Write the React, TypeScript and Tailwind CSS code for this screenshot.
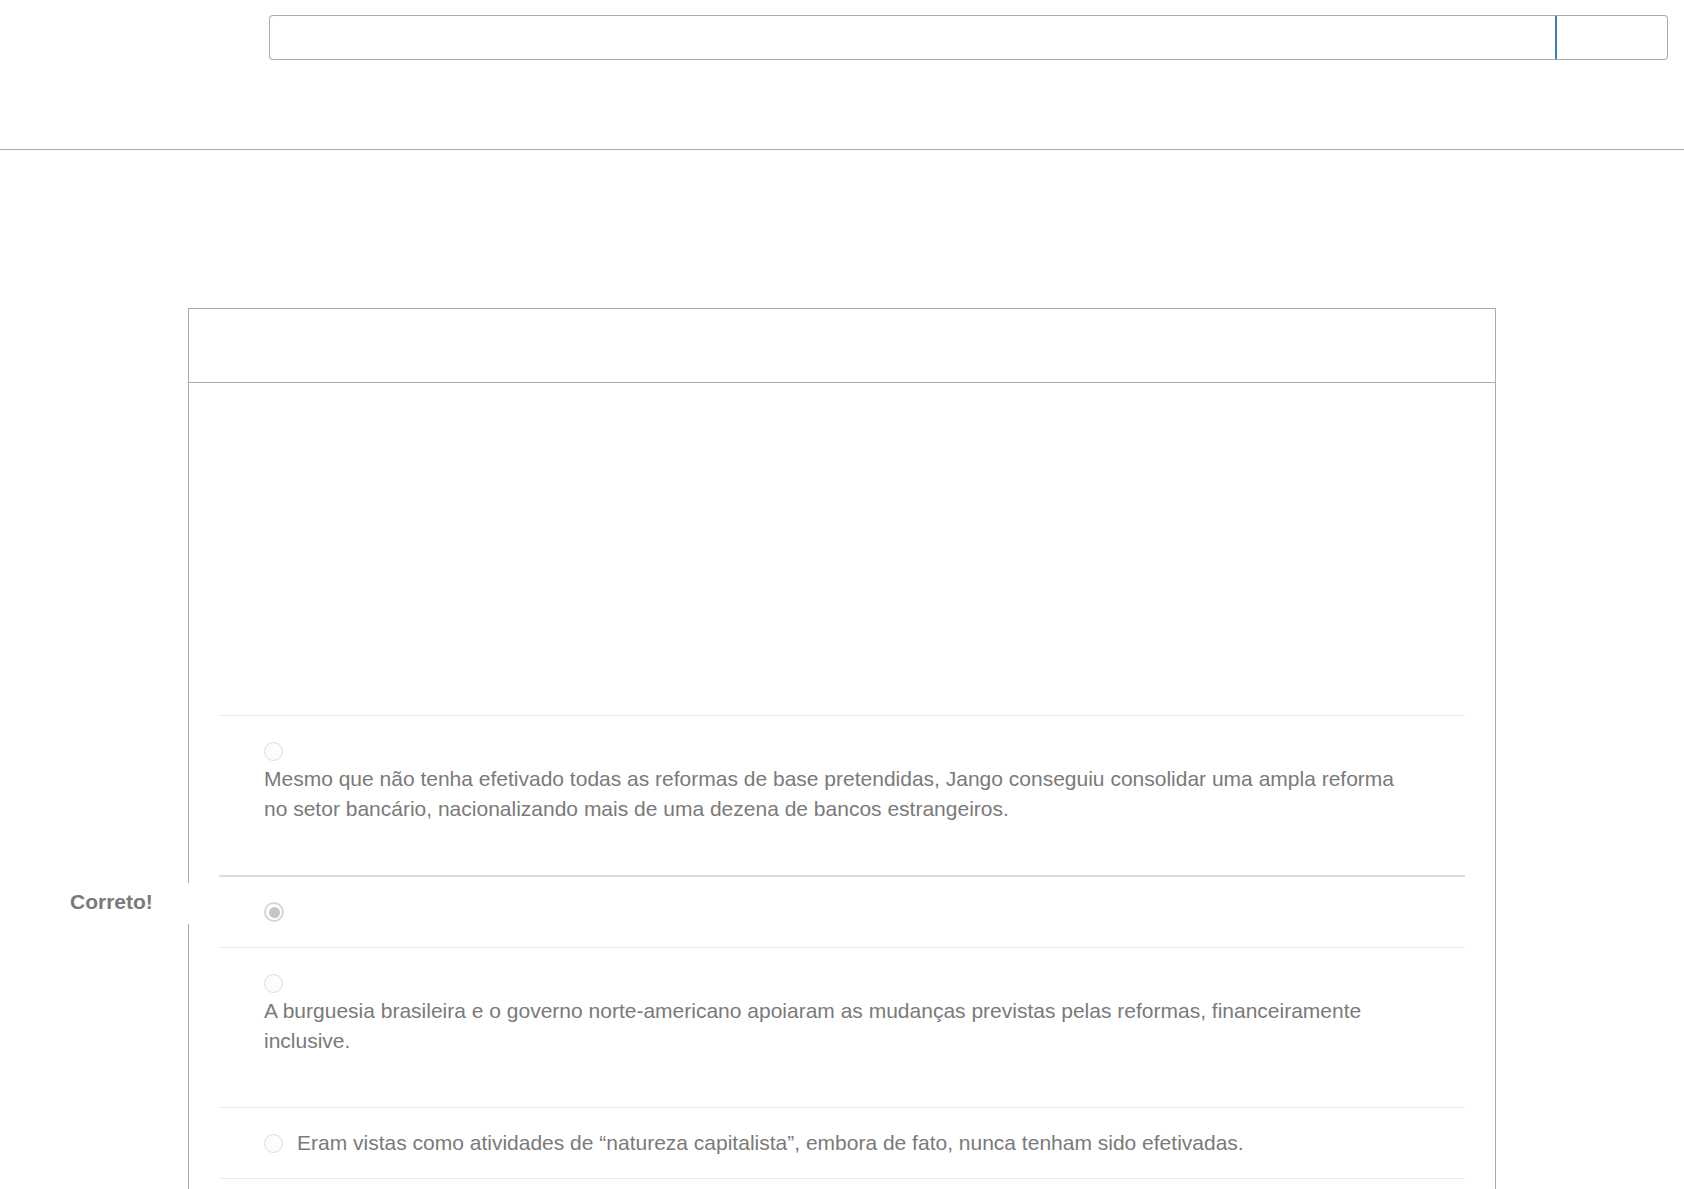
import React from "react";

interface Answer {
  id: string;
  text: string;
  selected?: boolean;
  inline?: boolean;
  correct?: boolean;
}

const answers: Answer[] = [
  {
    id: "a1",
    text: "Mesmo que não tenha efetivado todas as reformas de base pretendidas, Jango conseguiu consolidar uma ampla reforma no setor bancário, nacionalizando mais de uma dezena de bancos estrangeiros.",
  },
  { id: "a2", text: "", selected: true, inline: true, correct: true },
  {
    id: "a3",
    text: "A burguesia brasileira e o governo norte-americano apoiaram as mudanças previstas pelas reformas, financeiramente inclusive.",
  },
  {
    id: "a4",
    text: "Eram vistas como atividades de “natureza capitalista”, embora de fato, nunca tenham sido efetivadas.",
    inline: true,
  },
];

function Radio({ checked }: { checked?: boolean }) {
  if (checked) {
    return (
      <span className="flex h-5 w-5 shrink-0 items-center justify-center rounded-full border-2 border-[#d6d6d6] bg-white">
        <span className="h-[11px] w-[11px] rounded-full bg-[#c6c6c6]" />
      </span>
    );
  }
  return <span className="block h-[19px] w-[19px] shrink-0 rounded-full border border-[#dcdcdc] bg-[#fcfcfc]" />;
}

function AnswerRow({ answer }: { answer: Answer }) {
  if (answer.inline) {
    return (
      <div
        className={
          "relative flex items-center pl-[45px] " +
          (answer.selected ? "h-[72px] border-t-2 border-[#dcdcdc]" : "h-[71px] border-t border-[#ececec]")
        }
      >
        {answer.correct && (
          <div className="absolute left-[-165px] top-[6px] flex h-[41px] w-[160px] items-center bg-white pb-[4px] pl-4 text-[21px] font-bold text-[#7a7a7a]">
            Correto!
          </div>
        )}
        <Radio checked={answer.selected} />
        {answer.text && <span className="ml-[14px] text-[21px] leading-[30px] text-[#7a7a7a]">{answer.text}</span>}
      </div>
    );
  }
  return (
    <div className="border-t border-[#ececec] pb-[51px] pl-[45px] pr-[55px] pt-[26px]">
      <Radio checked={answer.selected} />
      <p className="mt-[3px] text-[21px] leading-[30px] text-[#7a7a7a]">{answer.text}</p>
    </div>
  );
}

export default function App() {
  return (
    <div className="min-h-[1189px] bg-white font-['Liberation_Sans',Arial,sans-serif]">
      <div className="h-[150px] border-b border-[#aaa]">
        <div className="ml-[269px] mr-[16px] flex pt-[15px]">
          <input
            type="text"
            className="h-[45px] flex-1 rounded-l-[4px] border border-r-2 border-[#a6aeb8] border-r-[#3a80c8] bg-white outline-none"
          />
          <button className="h-[45px] w-[111px] rounded-r-[4px] border border-l-0 border-[#aaa] bg-white" />
        </div>
      </div>

      <div className="ml-[188px] mt-[158px] w-[1308px] border border-b-0 border-[#aaa]">
        <div className="h-[74px] border-b border-[#aaa]" />
        <div className="px-[30px] pt-[332px]">
          {answers.map((answer) => (
            <AnswerRow key={answer.id} answer={answer} />
          ))}
          <div className="h-10 border-t border-[#ececec]" />
        </div>
      </div>
    </div>
  );
}
